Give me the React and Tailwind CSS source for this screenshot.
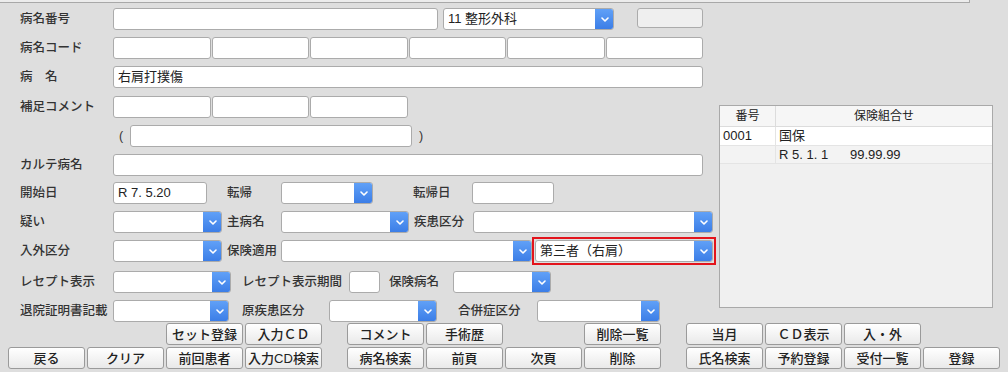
import React from "react";

const font = { fontFamily: '"Liberation Sans", "Noto Sans CJK JP", sans-serif' };

const Label = ({ className = "", children }) => (
  <div className={`shrink-0 text-[12.5px] font-medium text-[#333] leading-none whitespace-nowrap ${className}`}>
    {children}
  </div>
);

const Field = ({ className = "", children }) => (
  <div
    className={`h-[22px] shrink-0 bg-white border border-[#ababab] rounded-[3px] flex items-center px-[4px] text-[13px] text-[#222] whitespace-nowrap ${className}`}
  >
    {children}
  </div>
);

const Chevron = () => (
  <svg width="8" height="5" viewBox="0 0 8 5" fill="none">
    <path d="M1 1L4 4L7 1" stroke="white" strokeWidth="1.6" strokeLinecap="round" strokeLinejoin="round" />
  </svg>
);

const Select = ({ className = "", children }) => (
  <div
    className={`h-[22px] shrink-0 bg-white border border-[#ababab] rounded-[3px] flex overflow-hidden text-[13px] text-[#222] ${className}`}
  >
    <div className="flex-1 flex items-center px-[4px] whitespace-nowrap">{children}</div>
    <div className="w-[19px] -my-px -mr-px bg-linear-to-b from-[#62a2f8] to-[#3a7ce6] rounded-r-[3px] flex items-center justify-center">
      <Chevron />
    </div>
  </div>
);

const Btn = ({ children }) =>
  children ? (
    <button className="h-[22px] w-[77px] rounded-[3px] border border-[#9a9a9a] bg-linear-to-b from-[#ffffff] to-[#e9e9e9] text-[13px] font-medium text-[#222] leading-none whitespace-nowrap">
      {children}
    </button>
  ) : (
    <div className="h-[22px] w-[77px]" />
  );

const BtnGroup = ({ items }) => (
  <div className="grid grid-cols-[repeat(4,77px)] gap-[2px]">
    {items.map((t, i) => (
      <Btn key={i}>{t}</Btn>
    ))}
  </div>
);

export default function App() {
  return (
    <div className="w-[1008px] h-[372px] bg-[#dedede] overflow-hidden" style={font}>
      <div className="h-[3px] w-[970px] bg-[#ececec] border-b border-r border-[#a8a8a8]" />

      <div className="flex items-start pt-[5px]">
        {/* left form */}
        <div className="w-[719px] shrink-0 flex flex-col">
          <div className="flex items-center h-[22px]">
            <Label className="w-[113px] pl-[20px]">病名番号</Label>
            <Field className="w-[325px]" />
            <Select className="w-[171px] ml-[5px]">11 整形外科</Select>
            <div className="h-[20px] w-[66px] ml-[23px] -mt-[2px] rounded-[3px] border border-[#ababab] bg-[#efefef]" />
          </div>

          <div className="flex items-center h-[22px] mt-[7px]">
            <Label className="w-[113px] pl-[20px]">病名コード</Label>
            <div className="w-[590px] flex gap-[1px]">
              <Field className="flex-1" />
              <Field className="flex-1" />
              <Field className="flex-1" />
              <Field className="flex-1" />
              <Field className="flex-1" />
              <Field className="flex-1" />
            </div>
          </div>

          <div className="flex items-center h-[22px] mt-[7px]">
            <Label className="w-[113px] pl-[20px]">病　名</Label>
            <Field className="w-[590px]">右肩打撲傷</Field>
          </div>

          <div className="flex items-center h-[22px] mt-[8px]">
            <Label className="w-[113px] pl-[20px]">補足コメント</Label>
            <div className="w-[295px] flex gap-[1px]">
              <Field className="flex-1" />
              <Field className="flex-1" />
              <Field className="flex-1" />
            </div>
          </div>

          <div className="flex items-center h-[22px] mt-[7px]">
            <div className="w-[113px] shrink-0" />
            <div className="w-[17px] text-[12.5px] text-[#333] pl-[6px]">(</div>
            <Field className="w-[282px]" />
            <div className="ml-[7px] text-[12.5px] text-[#333]">)</div>
          </div>

          <div className="flex items-center h-[22px] mt-[7px]">
            <Label className="w-[113px] pl-[20px]">カルテ病名</Label>
            <Field className="w-[590px]" />
          </div>

          <div className="flex items-center h-[22px] mt-[6px]">
            <Label className="w-[113px] pl-[20px]">開始日</Label>
            <Field className="w-[94px]">R 7. 5.20</Field>
            <Label className="w-[54px] ml-[20px]">転帰</Label>
            <Select className="w-[92px]" />
            <Label className="w-[59px] ml-[40px]">転帰日</Label>
            <Field className="w-[82px]" />
          </div>

          <div className="flex items-center h-[22px] mt-[7px]">
            <Label className="w-[113px] pl-[20px]">疑い</Label>
            <Select className="w-[109px]" />
            <Label className="w-[54px] ml-[5px]">主病名</Label>
            <Select className="w-[128px]" />
            <Label className="w-[59px] ml-[5px]">疾患区分</Label>
            <Select className="w-[240px]" />
          </div>

          <div className="flex items-center h-[22px] mt-[7px]">
            <Label className="w-[113px] pl-[20px]">入外区分</Label>
            <Select className="w-[109px]" />
            <Label className="w-[54px] ml-[5px]">保険適用</Label>
            <Select className="w-[251px]" />
            <div className="-my-[3px] border-2 border-[#e3141c] p-[1px]">
              <Select className="w-[178px]">第三者（右肩）</Select>
            </div>
          </div>

          <div className="flex items-center h-[22px] mt-[9px]">
            <Label className="w-[113px] pl-[20px]">レセプト表示</Label>
            <Select className="w-[118px]" />
            <Label className="w-[107px] ml-[11px]">レセプト表示期間</Label>
            <Field className="w-[31px]" />
            <Label className="w-[64px] ml-[9px]">保険病名</Label>
            <Select className="w-[98px]" />
          </div>

          <div className="flex items-center h-[22px] mt-[7px]">
            <Label className="w-[113px] pl-[20px]">退院証明書記載</Label>
            <Select className="w-[116px]" />
            <Label className="w-[87px] ml-[13px]">原疾患区分</Label>
            <Select className="w-[108px]" />
            <Label className="w-[79px] ml-[21px]">合併症区分</Label>
            <Select className="w-[123px]" />
          </div>
        </div>

        {/* insurance table */}
        <div className="w-[274px] h-[203px] mt-[97px] border border-[#a9a9a9] bg-[#f0f0f0] text-[#222]">
          <div className="flex h-[21px] bg-[#f6f6f6] border-b border-[#dcdcdc] text-[12px]">
            <div className="w-[56px] border-r border-[#dcdcdc] flex items-center justify-center">番号</div>
            <div className="flex-1 flex items-center justify-center">保険組合せ</div>
          </div>
          <div className="flex h-[19px] bg-white border-b border-[#e4e4e4] text-[13px]">
            <div className="w-[56px] border-r border-[#e4e4e4] flex items-center pl-[3px]">0001</div>
            <div className="flex-1 flex items-center pl-[3px]">国保</div>
          </div>
          <div className="flex h-[18px] bg-[#f3f3f3] border-b border-[#e4e4e4] text-[13px]">
            <div className="w-[56px] border-r border-[#e4e4e4]" />
            <div className="flex-1 flex items-center pl-[3px]">
              <span className="w-[71px]">R 5. 1. 1</span>
              <span>99.99.99</span>
            </div>
          </div>
        </div>
      </div>

      {/* buttons */}
      <div className="flex flex-col gap-[2px] mt-[1px] pl-[8px]">
        <div className="flex gap-[25px]">
          <BtnGroup items={["", "", "セット登録", "入力ＣＤ"]} />
          <BtnGroup items={["コメント", "手術歴", "", "削除一覧"]} />
          <BtnGroup items={["当月", "ＣＤ表示", "入・外", ""]} />
        </div>
        <div className="flex gap-[25px]">
          <BtnGroup items={["戻る", "クリア", "前回患者", "入力CD検索"]} />
          <BtnGroup items={["病名検索", "前頁", "次頁", "削除"]} />
          <BtnGroup items={["氏名検索", "予約登録", "受付一覧", "登録"]} />
        </div>
      </div>
    </div>
  );
}
